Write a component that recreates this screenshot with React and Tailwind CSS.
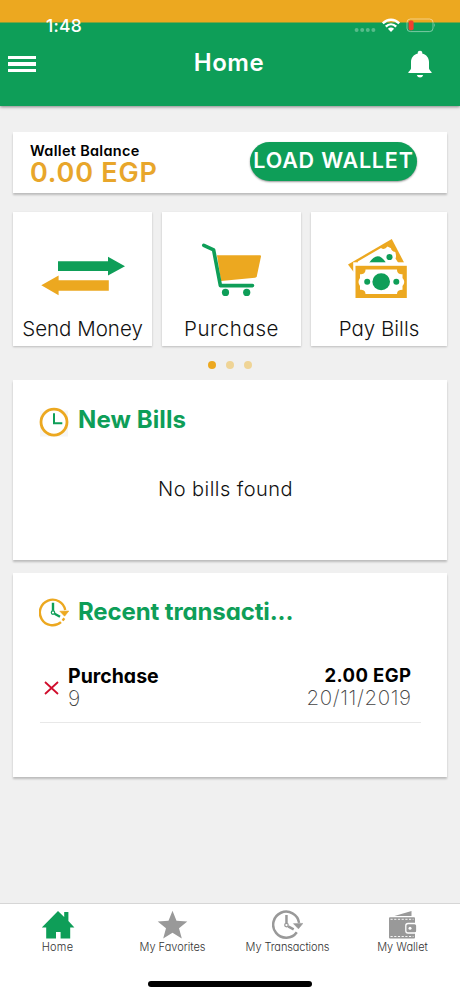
const GREEN = "#0e9e58";
const ORANGE = "#eca820";

function StatusBar() {
  return (
    <div className="flex h-[22px] items-start pt-[18px] pl-[46px] pr-[24px] text-white">
      <span className="text-[17.5px] leading-4 font-medium tracking-[0.2px]">1:48</span>
      <div className="ml-auto flex items-start">
        <svg className="mt-[9px]" width="22" height="6" viewBox="0 0 22 6" fill="#fff" opacity="0.3">
          <circle cx="2.6" cy="3" r="2" /><circle cx="8.2" cy="3" r="2" /><circle cx="13.8" cy="3" r="2" /><circle cx="19.4" cy="3" r="2" />
        </svg>
        <svg className="ml-[5px]" width="20" height="15" viewBox="0 0 20 15" fill="none" stroke="#fff" strokeWidth="2.4">
          <path d="M1.8 5.3C6.6 .6 13.4 .6 18.2 5.3" />
          <path d="M4.8 8.6C7.9 5.6 12.1 5.6 15.2 8.6" />
          <path d="M6.9 10.8Q10 8 13.1 10.8L10 14Z" fill="#fff" stroke="none" />
        </svg>
        <svg className="ml-[5px]" width="30" height="15" viewBox="0 0 30 15">
          <rect x="1" y="1" width="26" height="12.6" rx="3.4" fill="none" stroke="#fff" strokeOpacity="0.45" />
          <rect x="2.6" y="2.6" width="5" height="9.6" rx="1.8" fill="#ef4030" />
          <path d="M28.3 5Q30 7.3 28.3 9.6Z" fill="#fff" fillOpacity="0.5" />
        </svg>
      </div>
    </div>
  );
}

function ArrowsIcon() {
  return (
    <svg width="86" height="66" viewBox="40 237 86 66">
      <path d="M58 260.3H108V255.8L125 265.3L108 274.5V270H58Z" fill={GREEN} />
      <path d="M108.8 279.3H58.6V274.5L41.3 284.3L58.6 294.3V289.8H108.8Z" fill={ORANGE} />
    </svg>
  );
}

function CartIcon() {
  return (
    <svg width="62" height="66" viewBox="201 238 62 66">
      <path d="M217 255.3H260Q261.2 255.3 261 256.5L256.8 276.2Q256.5 277.5 255 277.7L221 281Z" fill={ORANGE} />
      <path d="M203.8 245.3L213.6 249.8L220.4 285.6H252.5" fill="none" stroke={GREEN} strokeWidth="3.6" strokeLinecap="round" strokeLinejoin="round" />
      <circle cx="225.5" cy="292.4" r="3.6" fill={GREEN} />
      <circle cx="246.7" cy="292.4" r="3.6" fill={GREEN} />
    </svg>
  );
}

function Note() {
  return (
    <>
      <rect x="355.5" y="265.8" width="51.3" height="32.2" fill={ORANGE} />
      <path d="M365.5 269.5H397C397 273 399 274.3 402.5 274.3V278Q406 281.8 402.5 286V289.8C399 289.8 397 291 397 294H365.5C365.5 291 363.5 289.8 360 289.8V286Q357 281.8 360 278V274.3C363.5 274.3 365.5 273 365.5 269.5Z" fill="#fff" />
      <ellipse cx="381.2" cy="281.8" rx="8.8" ry="8.5" fill={GREEN} />
      <circle cx="367.2" cy="281.8" r="3" fill={GREEN} />
      <circle cx="396.3" cy="281.8" r="3" fill={GREEN} />
    </>
  );
}

function BillsIcon() {
  return (
    <svg width="64" height="66" viewBox="347 238 64 66">
      <path d="M348 264.5L391.8 239L404.2 262.8L354 272.5Z" fill={ORANGE} />
      <path d="M355 265.5Q359 263.5 357.8 261.4L381 248Q384.5 250.5 387.5 246.5L391 248.2Q391 251 395.3 252Q396.6 256 395.5 258.5L399 264L355 270Z" fill="#fff" />
      <path d="M369 263Q377.5 250 385.5 262V263Z" fill={GREEN} />
      <circle cx="389.5" cy="257" r="3.1" fill={GREEN} />
      <rect x="353.2" y="262.3" width="56" height="38" fill="#fff" />
      <Note />
    </svg>
  );
}

function ClockIcon() {
  return (
    <svg width="30" height="32" viewBox="39 405.5 30 32" fill="none">
      <rect x="40" y="410" width="28" height="26" fill="#f6f6f6" />
      <circle cx="54" cy="421.6" r="13" fill="#fff" stroke={ORANGE} strokeWidth="2.8" />
      <path d="M54 412.7V422.8H62.3" stroke={GREEN} strokeWidth="2" />
    </svg>
  );
}

function HistoryIcon({ ring, hand, size, heavy }) {
  return (
    <svg width={size} height={size} viewBox="0 0 30 30" fill="none">
      <path d={heavy ? "M24 21.5A12.6 12.6 0 1 1 26.2 12.4" : "M22 24.2A12.8 12.8 0 1 1 26.2 12M25.3 20.3L23.6 22.6"} stroke={ring} strokeWidth="2.4" />
      <path d="M20.8 13.2L29.8 13L25.6 18.2Z" fill={ring} stroke={ring} strokeWidth="0.6" />
      <path d="M14 4.8V12.8M15.6 15.8L21 18.8" stroke={hand} strokeWidth="2.4" />
      <circle cx="14" cy="14.6" r="1.7" stroke={hand} strokeWidth="1.2" />
    </svg>
  );
}

function Tile({ label, icon, className, labelClass = "" }) {
  return (
    <div className={"flex h-[134px] flex-col items-center bg-white pt-[26px] shadow-[0_1px_2px_rgba(0,0,0,0.22)] " + className}>
      {icon}
      <span className={"mt-[15px] whitespace-nowrap text-[20.5px] leading-5 font-light " + labelClass}>{label}</span>
    </div>
  );
}

function NavItem({ icon, label, className = "" }) {
  return (
    <div className="flex flex-1 flex-col items-center pt-[6px]">
      <div className="flex h-[30px] items-center">{icon}</div>
      <span className={"mt-[1px] whitespace-nowrap text-[11px] leading-3 font-light text-[#333] " + className}>{label}</span>
    </div>
  );
}

export default function App() {
  return (
    <div className="flex h-[996px] w-[460px] flex-col overflow-hidden bg-[#f0f0f0] font-['Inter',sans-serif] text-[#111] [font-feature-settings:'cv11']">
      <header className="h-[106px] shrink-0 bg-[linear-gradient(#eca820_22px,#0e9e58_23px)] shadow-[0_1px_3px_rgba(0,0,0,0.45)]">
        <StatusBar />
        <div className="grid h-[84px] grid-cols-[1fr_auto_1fr] items-center px-[8px]">
          <div className="flex w-[28px] flex-col gap-[3.4px]">
            <i className="h-[3.3px] bg-white" /><i className="h-[3.3px] bg-white" /><i className="h-[3.3px] bg-white" />
          </div>
          <h1 className="mt-[-3px] mr-[2px] text-[24px] leading-6 font-semibold tracking-[0.6px] text-white">Home</h1>
          <svg className="mr-[19px] justify-self-end" width="26" height="28" viewBox="0 0 26 28" fill="#fff">
            <path d="M13 .8A2.3 2.3 0 0 0 10.8 3.5C6.5 4.6 4 8 4 12V18.5C4 20 1.4 21.2 1.2 23H24.8C24.6 21.2 22 20 22 18.5V12C22 8 19.5 4.6 15.2 3.5A2.3 2.3 0 0 0 13 .8Z" />
            <path d="M9.8 25H16.2Q15.4 27.6 13 27.6T9.8 25Z" />
          </svg>
        </div>
      </header>

      <main className="flex flex-1 flex-col px-[13px] pt-[26px]">
        <section className="flex h-[61px] items-start justify-between bg-white pt-[10px] pr-[30px] pl-[17px] shadow-[0_2px_2px_rgba(0,0,0,0.22)]">
          <div className="flex flex-col whitespace-nowrap">
            <span className="mt-[2px] text-[14.5px] leading-[14px] font-semibold tracking-[0.3px] text-black">Wallet Balance</span>
            <span className="mt-[1px] text-[27px] leading-[27px] font-semibold tracking-[0.8px] text-[#e8a62b]">0.00 EGP</span>
          </div>
          <button className="flex h-[39px] w-[167px] justify-center rounded-full bg-[#0e9e58] pt-[8px] text-[21.5px] leading-[21px] font-semibold tracking-[0.8px] whitespace-nowrap text-white shadow-[0_1px_2px_rgba(0,0,0,0.4)]">LOAD WALLET</button>
        </section>

        <section className="mt-[19px] flex gap-[10px]">
          <Tile className="w-[139px]" label="Send Money" icon={<ArrowsIcon />} />
          <Tile className="w-[139px]" label="Purchase" labelClass="tracking-[0.6px]" icon={<CartIcon />} />
          <Tile className="w-[136px]" label="Pay Bills" icon={<BillsIcon />} />
        </section>

        <div className="mt-[14px] flex h-[10px] items-center justify-center gap-[10px]">
          <i className="size-[8px] rounded-full bg-[#eca820]" />
          <i className="size-[8px] rounded-full bg-[#efd496]" />
          <i className="size-[8px] rounded-full bg-[#efd496]" />
        </div>

        <section className="mt-[10px] h-[180px] bg-white pt-[26px] shadow-[0_2px_2px_rgba(0,0,0,0.22)]">
          <div className="flex items-start pl-[26px]">
            <ClockIcon />
            <h2 className="mt-[2px] ml-[9px] text-[24px] leading-6 font-bold tracking-[0.1px] text-[#0e9e58]">New Bills</h2>
          </div>
          <p className="mt-[41px] pr-[9px] text-center text-[20px] leading-5 font-light tracking-[0.45px]">No bills found</p>
        </section>

        <section className="mt-[13px] h-[204px] bg-white pt-[25px] shadow-[0_2px_2px_rgba(0,0,0,0.22)]">
          <div className="flex items-start pl-[26px]">
            <HistoryIcon ring={ORANGE} hand={GREEN} size={30} />
            <h2 className="mt-[2px] ml-[9px] text-[24px] leading-6 font-bold tracking-[-0.12px] text-[#0e9e58]">Recent transacti...</h2>
          </div>
          <div className="mr-[26px] ml-[27px] flex h-[95px] items-start border-b border-[#e8e8e8] pt-[38px] pr-[10px]">
            <svg className="mt-[15px] ml-[4px]" width="15" height="14" viewBox="0 0 15 14" stroke="#d00d2c" strokeWidth="1.8"><path d="M1 1L14 13M14 1L1 13" /></svg>
            <div className="ml-[9px] flex flex-col">
              <span className="text-[19.5px] leading-[20px] font-bold text-black">Purchase</span>
              <span className="mt-[3px] text-[21px] leading-5 font-extralight text-[#444]">9</span>
            </div>
            <div className="mt-[-1px] ml-auto flex flex-col items-end">
              <span className="mr-[-0.4px] text-[18.5px] leading-[20px] font-bold tracking-[0.4px] text-black">2.00 EGP</span>
              <span className="mt-[3px] mr-[-0.6px] text-[20.5px] leading-5 font-extralight tracking-[0.6px] text-[#444]">20/11/2019</span>
            </div>
          </div>
        </section>
      </main>

      <nav className="flex h-[93px] shrink-0 flex-col border-t border-[#d6d6d6] bg-white">
        <div className="flex">
          <NavItem label="Home" className="tracking-[0.25px]" icon={
            <svg width="34" height="30" viewBox="0 0 34 30" fill={GREEN}><path d="M17 1L23.2 7V2H27.4V11L33.4 17.6H29.2V28.5H19.6V22H15V28.5H5.2V17.6H.8Z" /></svg>
          } />
          <NavItem label="My Favorites" icon={
            <svg width="32" height="30" viewBox="0.5 0 32 30" fill="#999"><path d="M16 .8L20 10.8L30.8 11.5L22.5 18.3L25.3 28.5L16 22.8L6.7 28.5L9.5 18.3L1.2 11.5L12 10.8Z" /></svg>
          } />
          <NavItem label="My Transactions" className="tracking-[-0.1px]" icon={<HistoryIcon ring="#999" hand="#999" size={31} heavy />} />
          <NavItem label="My Wallet" icon={
            <svg width="30" height="30" viewBox="0.5 0 30 30">
              <path d="M7 6L24 1V6Z" fill="#999" />
              <rect x="1.5" y="7.3" width="26" height="21.2" rx="1" fill="#999" />
              <path d="M3 9.3H26M3 26.5H26" stroke="#fff" strokeWidth="0.9" strokeDasharray="2.2 1.5" />
              <rect x="18.3" y="13.5" width="11" height="9.5" rx="2.2" fill="#999" stroke="#fff" strokeWidth="1.3" />
              <circle cx="22.5" cy="18.3" r="1.5" fill="#fff" />
            </svg>
          } />
        </div>
        <div className="mt-[28px] h-[6px] w-[164px] self-center rounded-full bg-black" />
      </nav>
    </div>
  );
}
